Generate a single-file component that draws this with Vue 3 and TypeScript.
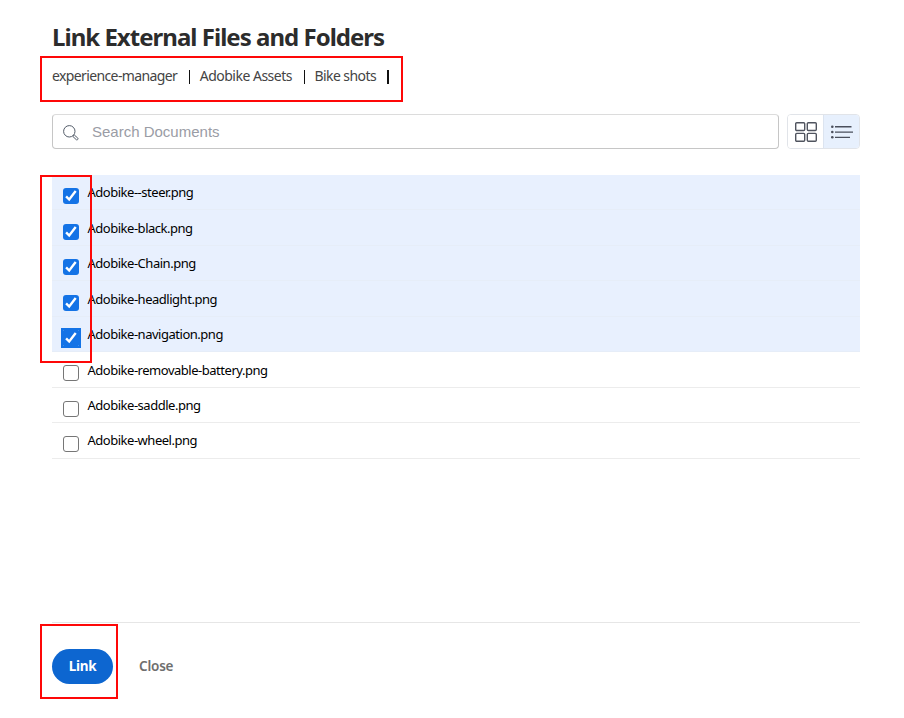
<script setup lang="ts">
import { ref } from 'vue'

interface FileItem {
  name: string
  checked: boolean
  focused?: boolean
}

const crumbs = ['experience-manager', 'Adobike Assets', 'Bike shots']
const query = ref('')
const files = ref<FileItem[]>([
  { name: 'Adobike--steer.png', checked: true },
  { name: 'Adobike-black.png', checked: true },
  { name: 'Adobike-Chain.png', checked: true },
  { name: 'Adobike-headlight.png', checked: true },
  { name: 'Adobike-navigation.png', checked: true, focused: true },
  { name: 'Adobike-removable-battery.png', checked: false },
  { name: 'Adobike-saddle.png', checked: false },
  { name: 'Adobike-wheel.png', checked: false },
])
</script>

<template>
  <main class="dialog">
    <h1 class="title">Link External Files and Folders</h1>
    <nav class="crumbs">
      <template v-for="(crumb, i) in crumbs" :key="crumb">
        <a class="crumb" :class="'crumb-' + i">{{ crumb }}</a><i class="bar"></i>
      </template>
    </nav>

    <div class="toolbar">
      <label class="search">
        <svg class="search-icon" width="16" height="16" viewBox="0 0 16 16" fill="none" stroke="#535c69" stroke-width="1">
          <circle cx="6.3" cy="6.3" r="5.7" />
          <path d="M9.8 11.4l1.5-1.4 3.5 3.1c.9.8-.6 2.4-1.5 1.6z" />
        </svg>
        <input v-model="query" class="search-input" type="text" placeholder="Search Documents" />
      </label>
      <div class="views">
        <button class="view" aria-label="Grid view">
          <svg width="22" height="20" viewBox="0 0 22 20" fill="none" stroke="#50545f" stroke-width="1.4">
            <rect x=".7" y=".7" width="9" height="7.8" rx="1" />
            <rect x="12.3" y=".7" width="9" height="7.8" rx="1" />
            <rect x=".7" y="11.4" width="9" height="7.8" rx="1" />
            <rect x="12.3" y="11.4" width="9" height="7.8" rx="1" />
          </svg>
        </button>
        <button class="view active" aria-label="List view">
          <svg width="22" height="14" viewBox="0 0 22 14" fill="#4a4f5c">
            <circle cx="1.3" cy="1.7" r="1.3" />
            <circle cx="1.3" cy="7" r="1.3" />
            <circle cx="1.3" cy="12.3" r="1.3" />
            <path d="M4 1.1h16.5v1.3H4zM4 6.4h18v1.3H4zM4 11.7h15v1.3H4z" />
          </svg>
        </button>
      </div>
    </div>

    <ul class="files">
      <li v-for="file in files" :key="file.name" class="file" :class="{ selected: file.checked }">
        <span class="check" :class="{ on: file.checked, focused: file.focused }" @click="file.checked = !file.checked">
          <svg v-if="file.checked" width="16" height="16" viewBox="0 0 16 16" fill="none" stroke="#fff" stroke-width="2.4">
            <path d="M3.1 8.3l3.1 3.2 6.5-8.4" />
            <path v-if="file.focused" class="corners" d="M-.5 -.5h1v1h-1zM15.5 -.5h1v1h-1zM-.5 15.5h1v1h-1zM15.5 15.5h1v1h-1z" />
          </svg>
        </span>
        <span class="name">{{ file.name }}</span>
      </li>
    </ul>

    <footer class="actions">
      <button class="link">Link</button>
      <button class="close">Close</button>
    </footer>

    <div class="mark mark-crumbs"></div>
    <div class="mark mark-checks"></div>
    <div class="mark mark-link"></div>
  </main>
</template>

<style>
body {
  background: #fff;
}
</style>

<style scoped>
.dialog {
  position: relative;
  box-sizing: border-box;
  width: 904px;
  height: 718px;
  padding: 20px 44px 0 52px;
  display: flex;
  flex-direction: column;
  overflow: hidden;
  font-family: 'Noto Sans', sans-serif;
  color: #000;
}
.title {
  margin: 0;
  height: 34px;
  line-height: 34px;
  font-size: 24px;
  font-weight: 700;
  letter-spacing: -0.98px;
  color: #2c2c2c;
  white-space: nowrap;
}
.crumbs {
  display: flex;
  align-items: center;
  height: 20px;
  margin-top: 12px;
  font-size: 14px;
  letter-spacing: -0.62px;
  color: #444;
  line-height: 20px;
  white-space: nowrap;
}
.crumb {
  width: 126px;
}
.crumb-1 {
  width: 93px;
  letter-spacing: -0.5px;
}
.crumb-2 {
  width: 62px;
  letter-spacing: -0.55px;
}
.bar {
  width: 1.4px;
  height: 14px;
  margin: 1px 9.3px 0 11px;
  background: #111;
}
.toolbar {
  display: flex;
  gap: 8px;
  margin-top: 28px;
  width: 808px;
  height: 35px;
}
.search {
  box-sizing: border-box;
  display: flex;
  align-items: center;
  flex: 1;
  padding-left: 10px;
  border: 1px solid #c6c6c6;
  border-top-color: #dcdcdc;
  border-radius: 4px;
}
.search-icon {
  margin-top: 2px;
  flex: none;
  overflow: visible;
}
.search-input {
  flex: 1;
  margin-left: 13px;
  padding: 0;
  border: 0;
  outline: 0;
  background: none;
  font: 15px 'Liberation Sans', Arial, sans-serif;
}
.search-input::placeholder {
  color: #9a9ca5;
}
.views {
  box-sizing: border-box;
  display: flex;
  width: 73px;
  border: 1px solid #e1e4e9;
  border-radius: 4px;
  overflow: hidden;
}
.view {
  display: flex;
  align-items: center;
  justify-content: center;
  flex: 1;
  padding: 0;
  border: 0;
  background: #fff;
}
.view.active {
  background: #e7f0fd;
  border-left: 1px solid #dce4f0;
}
.files {
  margin: 26px 0 0;
  padding: 0;
  width: 808px;
  list-style: none;
}
.file {
  box-sizing: border-box;
  display: flex;
  height: 35.45px;
  padding-left: 10.8px;
  border-bottom: 1px solid #ececec;
}
.file.selected {
  background: #e8f0fe;
  border-bottom-color: #e6edf8;
}
.check {
  box-sizing: border-box;
  flex: none;
  width: 16px;
  height: 16px;
  margin-top: 13.2px;
  border: 1px solid #767676;
  border-radius: 3px;
  background: #fff;
}
.check svg {
  display: block;
  overflow: visible;
}
.check.on {
  border: 0;
  background: #1473e6;
}
.check.focused {
  border-radius: 0;
  outline: 2px solid #1473e6;
}
.corners {
  fill: #b9d5f8;
  stroke: none;
}
.name {
  margin-left: 8.7px;
  height: 20px;
  margin-top: 7.4px;
  font-size: 13px;
  line-height: 20px;
  letter-spacing: -0.48px;
  white-space: nowrap;
}
.actions {
  display: flex;
  align-items: flex-start;
  margin-top: auto;
  box-sizing: border-box;
  width: 808px;
  height: 96px;
  padding-top: 26px;
  border-top: 1px solid #e6e6e6;
}
.link,
.close {
  height: 35px;
  padding: 0;
  border: 0;
  font: 700 13.5px/35px 'Noto Sans', sans-serif;
  letter-spacing: -0.3px;
}
.link {
  width: 61px;
  border-radius: 18px;
  background: #0d66d0;
  color: #fff;
}
.close {
  margin-left: 26px;
  background: none;
  color: #6e6e6e;
  font-weight: 600;
  letter-spacing: -0.2px;
}
.mark {
  position: absolute;
  box-sizing: border-box;
  border: 2px solid #fe0808;
  pointer-events: none;
}
.mark-crumbs {
  left: 40px;
  top: 55.5px;
  width: 363px;
  height: 46px;
}
.mark-checks {
  left: 40px;
  top: 175px;
  width: 52px;
  height: 188px;
}
.mark-link {
  left: 40px;
  top: 624px;
  width: 78px;
  height: 75px;
}
</style>
